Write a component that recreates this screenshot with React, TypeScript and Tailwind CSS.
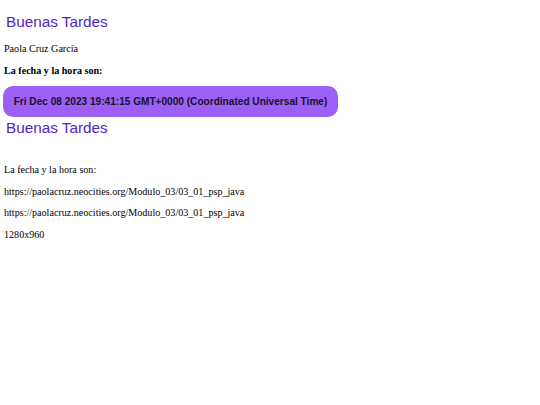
import React from "react";

const serif = { fontFamily: '"Liberation Serif", serif' };
const sans = { fontFamily: '"Liberation Sans", Arial, sans-serif' };

const Saludo = ({ className = "" }: { className?: string }) => (
  <h1
    className={`ml-[2px] text-[15.3px] leading-[17px] font-normal text-[#5522c8] ${className}`}
    style={sans}
  >
    Buenas Tardes
  </h1>
);

export default function App() {
  const url = "https://paolacruz.neocities.org/Modulo_03/03_01_psp_java";
  return (
    <div className="min-h-[405px] bg-white px-[4px] text-black" style={serif}>
      <Saludo className="pt-[13px]" />
      <p className="mt-[13px] text-[10.1px] leading-[12px]">Paola Cruz García</p>
      <p className="mt-[10px] text-[10.1px] leading-[12px] font-bold">La fecha y la hora son:</p>
      <div
        className="mt-[9px] w-[335px] h-[31px] -ml-[1px] rounded-[10px] bg-[#9b61f6] flex items-center justify-center whitespace-nowrap text-[10.1px] font-bold text-[#18122a]"
        style={sans}
      >
        Fri Dec 08 2023 19:41:15 GMT+0000 (Coordinated Universal Time)
      </div>
      <Saludo className="mt-[2px]" />
      <p className="mt-[28px] text-[10.1px] leading-[12px]">La fecha y la hora son:</p>
      <p className="mt-[9.7px] text-[10.1px] leading-[12px]">{url}</p>
      <p className="mt-[9.7px] text-[10.1px] leading-[12px]">{url}</p>
      <p className="mt-[9.7px] text-[10.1px] leading-[12px]">1280x960</p>
    </div>
  );
}
